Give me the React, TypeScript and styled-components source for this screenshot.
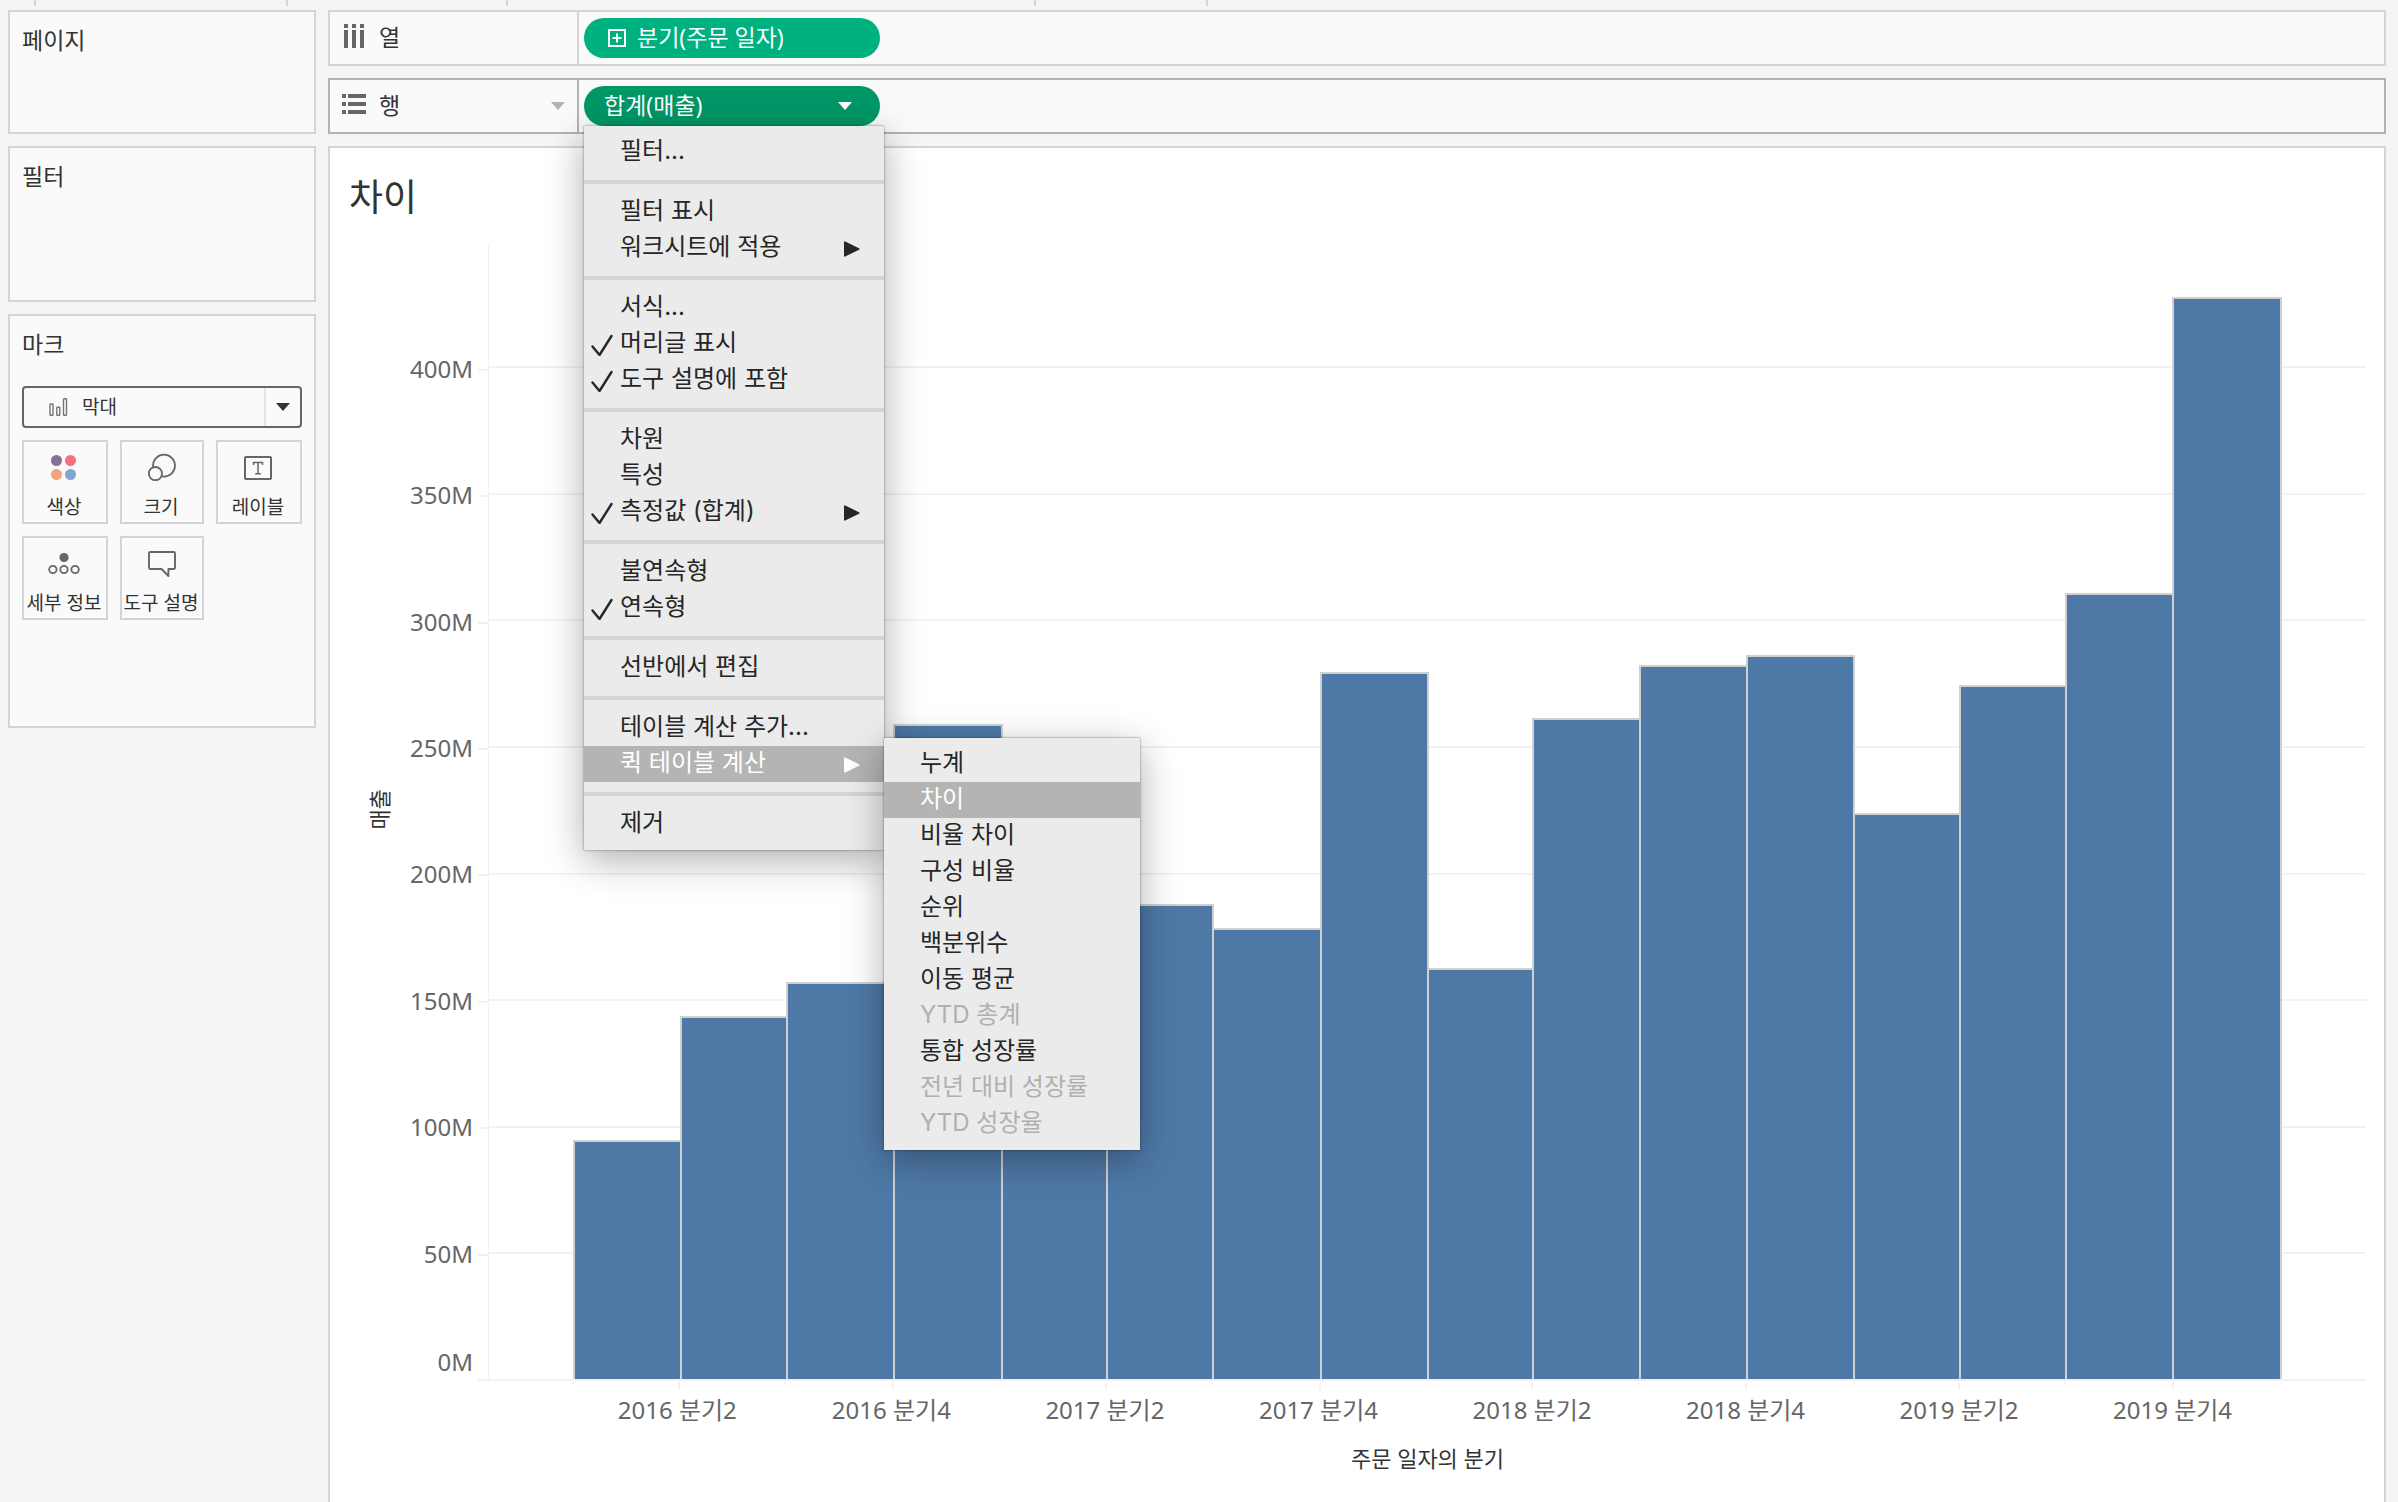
import React from 'react';
import styled, { createGlobalStyle, css } from 'styled-components';

const color = {
  page: '#f5f5f5',
  panel: '#fafafa',
  line: '#d4d4d4',
  lineActive: '#b3b3b3',
  text: '#333333',
  axis: '#666666',
  icon: '#666666',
  bar: '#4e79a7',
  pill: '#00b180',
  pillActive: '#009767',
  menu: '#ebebeb',
  menuText: '#262626',
  menuActive: '#b4b4b4',
  menuDisabled: '#b0b0b0',
  grid: '#f2f2f2',
};

const GlobalStyle = createGlobalStyle`
  *, *::before, *::after { box-sizing: border-box; }
  body {
    margin: 0;
    background: ${color.page};
    color: ${color.text};
    font-family: "Noto Sans", "Noto Sans CJK KR", sans-serif;
  }
  h1, h2, ul { margin: 0; padding: 0; }
  ul { list-style: none; }
  button, select { font-family: inherit; color: inherit; margin: 0; }
`;

/* ---------- Page frame ---------- */

const Page = styled.div`
  display: flex;
  flex-direction: column;
  height: 100vh;
  min-height: 900px;
  overflow: hidden;
`;

const ToolbarEdge = styled.div`
  display: flex;
  height: 10px;
  flex: none;
`;

const ToolbarGroup = styled.div<{ $width: number }>`
  width: ${(p) => p.$width}px;
  height: 6px;
  border-right: 2px solid ${color.line};
`;

const Workspace = styled.div`
  display: flex;
  flex: 1;
  min-height: 0;
  gap: 12px;
  padding: 0 12px 0 8px;
`;

const Sidebar = styled.aside`
  display: flex;
  flex-direction: column;
  gap: 12px;
  width: 308px;
  flex: none;
`;

const Main = styled.main`
  display: flex;
  flex-direction: column;
  flex: 1;
  min-width: 0;
  gap: 12px;
`;

/* ---------- Sidebar cards ---------- */

const Card = styled.section<{ $minHeight: number }>`
  min-height: ${(p) => p.$minHeight}px;
  padding: 13px 12px;
  background: ${color.panel};
  border: 2px solid ${color.line};
`;

const CardTitle = styled.h2`
  font-size: 23px;
  line-height: 30px;
  font-weight: 400;
`;

const MarkTypeField = styled.label`
  display: grid;
  grid-template-columns: 25px 20px 1fr 36px;
  align-items: center;
  height: 42px;
  margin-top: 27px;
  border: 2px solid ${color.icon};
  border-radius: 4px;
  background: ${color.panel};

  & > svg:first-child { grid-area: 1 / 2; }
`;

const MarkSelect = styled.select`
  grid-area: 1 / 1 / 2 / 5;
  width: 100%;
  height: 38px;
  padding: 0 0 0 58px;
  border: 0;
  background: transparent;
  appearance: none;
  font-size: 19px;
  line-height: 38px;
`;

const SelectArrow = styled.span`
  grid-area: 1 / 4;
  display: grid;
  place-items: center;
  height: 38px;
  border-left: 2px solid #e4e4e4;
  pointer-events: none;
`;

const MarkGrid = styled.div`
  display: grid;
  grid-template-columns: minmax(0, 86fr) minmax(0, 84fr) minmax(0, 86fr);
  gap: 12px;
  margin-top: 12px;
`;

const MarkButton = styled.button`
  display: flex;
  flex-direction: column;
  align-items: center;
  gap: 11px;
  height: 84px;
  padding: 10px 2px 0 0;
  border: 2px solid ${color.line};
  background: ${color.panel};
  font-size: 19px;
  line-height: 24px;
  white-space: nowrap;
`;

/* ---------- Shelves ---------- */

const ShelfBar = styled.section<{ $active?: boolean }>`
  display: flex;
  height: 56px;
  flex: none;
  background: ${color.panel};
  border: 2px solid ${(p) => (p.$active ? color.lineActive : color.line)};
`;

const ShelfHeader = styled.header<{ $active?: boolean }>`
  display: flex;
  align-items: center;
  gap: 13px;
  width: 249px;
  padding: 0 12px;
  border-right: 2px solid ${(p) => (p.$active ? color.lineActive : color.line)};
`;

const ShelfName = styled.h2`
  flex: 1;
  padding-bottom: 2px;
  font-size: 23px;
  line-height: 30px;
  font-weight: 400;
`;

const ShelfSlot = styled.div`
  display: flex;
  align-items: center;
  padding-left: 5px;
`;

const PillAnchor = styled.div`
  position: relative;
`;

const Pill = styled.button<{ $active?: boolean }>`
  display: flex;
  align-items: center;
  gap: 11px;
  width: 296px;
  height: 40px;
  padding: 0 28px 0 ${(p) => (p.$active ? 20 : 24)}px;
  border: 0;
  border-radius: 20px;
  background: ${(p) => (p.$active ? color.pillActive : color.pill)};
  color: #ffffff;
  font-size: 23px;
  line-height: 30px;
  text-align: left;
`;

const PillLabel = styled.span`
  flex: 1;
  padding-bottom: 2px;
`;

/* ---------- Menus ---------- */

const menuSurface = css`
  position: absolute;
  z-index: 2;
  padding: 8px 0;
  background: ${color.menu};
  box-shadow: 0 0 2px rgba(0, 0, 0, 0.5), 0 10px 36px rgba(0, 0, 0, 0.32);
`;

const Menu = styled.ul`
  ${menuSurface}
  top: 100%;
  left: 0;
  width: 300px;
  font-family: Inter, "Noto Sans CJK KR", sans-serif;
`;

const Submenu = styled.ul`
  ${menuSurface}
  top: -8px;
  left: 100%;
  width: 256px;
`;

const MenuRow = styled.li`
  position: relative;
`;

const MenuSeparator = styled.li`
  height: 4px;
  margin: 10px 0;
  background: ${color.line};
`;

const MenuButton = styled.button<{ $active?: boolean }>`
  display: grid;
  grid-template-columns: 22px 1fr 16px;
  column-gap: 7px;
  align-items: center;
  width: 100%;
  height: 36px;
  padding: 2px 24px 0 7px;
  border: 0;
  background: ${(p) => (p.$active ? color.menuActive : 'transparent')};
  color: ${(p) => (p.$active ? '#ffffff' : color.menuText)};
  font-size: 24px;
  line-height: 30px;
  text-align: left;
  white-space: nowrap;

  &:disabled { color: ${color.menuDisabled}; }
`;

const MenuLabel = styled.span`
  grid-column: 2;
  padding-bottom: 4px;
`;

/* ---------- Chart ---------- */

const View = styled.section`
  display: flex;
  flex-direction: column;
  flex: 1;
  min-height: 0;
  padding: 25px 18px 27px 19px;
  background: #ffffff;
  border: 2px solid ${color.line};
  border-bottom: 0;
`;

const ViewTitle = styled.h1`
  font-size: 37px;
  line-height: 48px;
  font-weight: 400;
`;

const ChartGrid = styled.div`
  display: grid;
  grid-template-columns: 34px 77px 15px 1fr;
  grid-template-rows: 1fr auto;
  flex: 1;
  min-height: 0;
  margin-top: 23px;
  padding-left: 13px;
`;

const ValueTitle = styled.div`
  place-self: center;
  margin-bottom: 6px;
  writing-mode: vertical-rl;
  text-orientation: sideways;
  transform: rotate(180deg);
  font-size: 22px;
  line-height: 34px;
`;

const ScaleColumn = styled.div`
  display: flex;
  flex-direction: column;
  padding-bottom: 2px;
`;

const ScaleStep = styled.div<{ $span: number }>`
  flex: ${(p) => p.$span} 0 0;
  min-height: 0;
  display: flex;
  flex-direction: column;
  align-items: flex-end;
`;

const ScaleLabel = styled.span`
  height: 34px;
  margin-top: -16px;
  color: ${color.axis};
  font-size: 24px;
  line-height: 34px;
`;

const ZeroLabel = styled(ScaleLabel)`
  margin-top: auto;
`;

const ScaleTick = styled.span`
  width: 10px;
  height: 2px;
  margin-top: 1px;
  background: ${color.grid};
`;

const ZeroTick = styled(ScaleTick)`
  margin: auto 0 -2px;
`;

const Plot = styled.div`
  display: grid;
  border-left: 1px solid ${color.grid};
  border-bottom: 2px solid ${color.grid};
`;

const GridLines = styled.div`
  grid-area: 1 / 1;
  display: flex;
  flex-direction: column;
`;

const GridStep = styled.div<{ $span: number; $line?: boolean }>`
  flex: ${(p) => p.$span} 0 0;
  min-height: 0;
  ${(p) => p.$line && `border-top: 2px solid ${color.grid};`}
`;

const Bars = styled.div`
  grid-area: 1 / 1;
  display: flex;
`;

const Span = styled.div<{ $days: number }>`
  flex: ${(p) => p.$days} 0 0;
  min-width: 0;
`;

const BarSlot = styled(Span)`
  display: flex;
  align-items: flex-end;
`;

const Bar = styled.div`
  flex: 1;
  margin: 0 -1px;
  background: ${color.bar};
  border: 2px solid #d0d0d0;
  border-bottom: 0;
`;

const TimeAxis = styled.div`
  grid-column: 4;
  display: flex;
  flex-direction: column;
  padding-left: 1px;
`;

const TickRow = styled.div`
  display: flex;
  height: 12px;
  padding-top: 1px;
`;

const Tick = styled(Span)<{ $major: boolean }>`
  height: ${(p) => (p.$major ? 8 : 2)}px;
  margin-left: -1px;
  margin-right: 1px;
  border-left: 2px solid ${color.grid};
`;

const TimeLabels = styled.div`
  display: flex;
  color: ${color.axis};
  font-size: 24px;
  line-height: 34px;
  text-align: center;
  white-space: nowrap;
`;

const TimeLabel = styled(Span)`
  padding-right: 4px;
`;

const TimeTitle = styled.div`
  margin-top: 14px;
  font-family: "Noto Sans", "Noto Sans CJK KR", sans-serif;
  font-size: 22px;
  line-height: 34px;
  text-align: center;
`;

/* ---------- Icons ---------- */

const ColumnsIcon = () => (
  <svg width="24" height="28" viewBox="0 0 24 28" fill={color.icon} aria-hidden="true">
    {[2, 10, 18].map((x) => (
      <g key={x}>
        <rect x={x} y="0" width="4" height="4" />
        <rect x={x} y="6" width="4" height="18" />
      </g>
    ))}
  </svg>
);

const RowsIcon = () => (
  <svg width="24" height="24" viewBox="0 0 24 24" fill={color.icon} aria-hidden="true">
    {[0, 8, 16].map((y) => (
      <g key={y}>
        <rect x="0" y={y} width="4" height="4" />
        <rect x="6" y={y} width="18" height="4" />
      </g>
    ))}
  </svg>
);

const Caret = ({ fill }: { fill: string }) => (
  <svg width="14" height="8" viewBox="0 0 14 8" fill={fill} aria-hidden="true">
    <path d="M0 0h14L7 8z" />
  </svg>
);

const ExpandIcon = () => (
  <svg width="18" height="18" viewBox="0 0 18 18" fill="none" stroke="#fff" strokeWidth="2" aria-hidden="true">
    <rect x="1" y="1" width="16" height="16" />
    <path d="M9 4.5v9M4.5 9h9" />
  </svg>
);

const CheckIcon = () => (
  <svg width="22" height="22" viewBox="0 0 22 22" fill="none" stroke="currentColor" strokeWidth="2.4" strokeLinecap="round" strokeLinejoin="round" aria-hidden="true">
    <path d="M1.5 12.5L8.5 21L20.5 2" />
  </svg>
);

const ArrowShape = styled.svg`
  grid-column: 3;
`;

const SubmenuArrow = () => (
  <ArrowShape width="16" height="18" viewBox="0 0 16 18" fill="currentColor" aria-hidden="true">
    <path d="M0 2.2Q0 1 1.2 1.5L15 8.2Q16.4 9 15 9.8L1.2 16.5Q0 17 0 15.8z" />
  </ArrowShape>
);

const BarTypeIcon = () => (
  <svg width="20" height="18" viewBox="0 0 20 18" fill="none" stroke="#757575" strokeWidth="1.4" aria-hidden="true">
    <rect x="1" y="6" width="3" height="11.3" rx="0.6" />
    <rect x="7.8" y="9.3" width="3" height="8" rx="0.6" />
    <rect x="14.5" y="0.7" width="3" height="16.6" rx="0.6" />
  </svg>
);

const ColorIcon = () => (
  <svg width="32" height="32" viewBox="0 0 32 32" aria-hidden="true">
    <circle cx="8.5" cy="8.5" r="5.5" fill="#857196" />
    <circle cx="22.5" cy="8.5" r="5.5" fill="#f9707f" />
    <circle cx="8.5" cy="22.5" r="5.5" fill="#f2a57c" />
    <circle cx="22.5" cy="22.5" r="5.5" fill="#82a5cd" />
  </svg>
);

const SizeIcon = () => (
  <svg width="32" height="32" viewBox="0 0 32 32" fill={color.panel} stroke={color.icon} strokeWidth="1.8" aria-hidden="true">
    <circle cx="19" cy="13.6" r="11" />
    <circle cx="10.4" cy="21.6" r="6.6" />
  </svg>
);

const LabelIcon = () => (
  <svg width="32" height="32" viewBox="0 0 32 32" fill="none" stroke={color.icon} strokeWidth="2" aria-hidden="true">
    <rect x="3" y="5" width="26" height="22" rx="0.8" />
    <path d="M11.5 13v-2.6h9V13M16 10.4v11.4M13.2 21.8h5.6" strokeWidth="1.5" />
  </svg>
);

const DetailIcon = () => (
  <svg width="32" height="32" viewBox="0 0 32 32" fill="none" stroke={color.icon} strokeWidth="1.8" aria-hidden="true">
    <circle cx="16" cy="9.5" r="4.6" fill={color.icon} stroke="none" />
    <circle cx="4.9" cy="21.5" r="3.7" />
    <circle cx="16" cy="21.5" r="3.7" />
    <circle cx="27.1" cy="21.5" r="3.7" />
  </svg>
);

const TooltipIcon = () => (
  <svg width="32" height="32" viewBox="0 0 32 32" fill="none" stroke={color.icon} strokeWidth="1.9" strokeLinejoin="round" aria-hidden="true">
    <path d="M5.2 4h23.6q1.2 0 1.2 1.2v14.6q0 1.2-1.2 1.2H23.4v7L16.6 21H5.2Q4 21 4 19.8V5.2Q4 4 5.2 4z" />
  </svg>
);

/* ---------- Data ---------- */

const marks = [
  { label: '색상', Icon: ColorIcon },
  { label: '크기', Icon: SizeIcon },
  { label: '레이블', Icon: LabelIcon },
  { label: '세부 정보', Icon: DetailIcon },
  { label: '도구 설명', Icon: TooltipIcon },
];

type Entry = {
  label: string;
  checked?: boolean;
  disabled?: boolean;
  active?: boolean;
  more?: boolean;
  children?: Entry[];
};

const quickCalculations: Entry[] = [
  { label: '누계' },
  { label: '차이', active: true },
  { label: '비율 차이' },
  { label: '구성 비율' },
  { label: '순위' },
  { label: '백분위수' },
  { label: '이동 평균' },
  { label: 'YTD 총계', disabled: true },
  { label: '통합 성장률' },
  { label: '전년 대비 성장률', disabled: true },
  { label: 'YTD 성장율', disabled: true },
];

const menuGroups: Entry[][] = [
  [{ label: '필터...' }],
  [{ label: '필터 표시' }, { label: '워크시트에 적용', more: true }],
  [
    { label: '서식...' },
    { label: '머리글 표시', checked: true },
    { label: '도구 설명에 포함', checked: true },
  ],
  [{ label: '차원' }, { label: '특성' }, { label: '측정값 (합계)', checked: true, more: true }],
  [{ label: '불연속형' }, { label: '연속형', checked: true }],
  [{ label: '선반에서 편집' }],
  [
    { label: '테이블 계산 추가...' },
    { label: '퀵 테이블 계산', active: true, more: true, children: quickCalculations },
  ],
  [{ label: '제거' }],
];

/* Sales per quarter in millions; a bar is as wide as its quarter has days. */
const quarters = [
  { days: 91, sales: 94.5 },
  { days: 91, sales: 143.5 },
  { days: 92, sales: 157 },
  { days: 92, sales: 259 },
  { days: 90, sales: 120 },
  { days: 91, sales: 187.8 },
  { days: 92, sales: 178.3 },
  { days: 92, sales: 279.5 },
  { days: 90, sales: 162.5 },
  { days: 91, sales: 261.3 },
  { days: 92, sales: 282.6 },
  { days: 92, sales: 286.5 },
  { days: 90, sales: 224.1 },
  { days: 91, sales: 274.7 },
  { days: 92, sales: 311.1 },
  { days: 92, sales: 428 },
];

const marginDays = 73;
const scaleHead = 49;
const scaleStep = 50;
const scaleMax = 400 + scaleHead;
const scaleValues = [400, 350, 300, 250, 200, 150, 100, 50];

const timeLabels = [2016, 2017, 2018, 2019].flatMap((year) => [`${year} 분기2`, `${year} 분기4`]);

/* ---------- Components ---------- */

const MenuEntry = ({ entry }: { entry: Entry }) => (
  <MenuRow role="none">
    <MenuButton
      type="button"
      role={entry.checked ? 'menuitemcheckbox' : 'menuitem'}
      aria-checked={entry.checked}
      aria-haspopup={entry.more ? 'menu' : undefined}
      disabled={entry.disabled}
      $active={entry.active}
    >
      {entry.checked && <CheckIcon />}
      <MenuLabel>{entry.label}</MenuLabel>
      {entry.more && <SubmenuArrow />}
    </MenuButton>
    {entry.children && (
      <Submenu role="menu" aria-label={entry.label}>
        {entry.children.map((child) => (
          <MenuEntry key={child.label} entry={child} />
        ))}
      </Submenu>
    )}
  </MenuRow>
);

const FieldMenu = () => (
  <Menu role="menu" aria-label="합계(매출)">
    {menuGroups.map((group, index) => (
      <React.Fragment key={group[0].label}>
        {index > 0 && <MenuSeparator role="separator" />}
        {group.map((entry) => (
          <MenuEntry key={entry.label} entry={entry} />
        ))}
      </React.Fragment>
    ))}
  </Menu>
);

const MarksCard = () => (
  <Card $minHeight={414}>
    <CardTitle>마크</CardTitle>
    <MarkTypeField>
      <BarTypeIcon />
      <MarkSelect aria-label="마크 유형" defaultValue="bar">
        <option value="bar">막대</option>
      </MarkSelect>
      <SelectArrow>
        <Caret fill={color.text} />
      </SelectArrow>
    </MarkTypeField>
    <MarkGrid>
      {marks.map(({ label, Icon }) => (
        <MarkButton key={label} type="button">
          <Icon />
          {label}
        </MarkButton>
      ))}
    </MarkGrid>
  </Card>
);

const Chart = () => (
  <ChartGrid>
    <ValueTitle>매출</ValueTitle>
    <ScaleColumn>
      <ScaleStep $span={scaleHead} />
      {scaleValues.map((value) => (
        <ScaleStep key={value} $span={scaleStep}>
          <ScaleLabel>{value}M</ScaleLabel>
          {value === 50 && <ZeroLabel>0M</ZeroLabel>}
        </ScaleStep>
      ))}
    </ScaleColumn>
    <ScaleColumn>
      <ScaleStep $span={scaleHead} />
      {scaleValues.map((value) => (
        <ScaleStep key={value} $span={scaleStep}>
          <ScaleTick />
          {value === 50 && <ZeroTick />}
        </ScaleStep>
      ))}
    </ScaleColumn>
    <Plot>
      <GridLines>
        <GridStep $span={scaleHead} />
        {scaleValues.map((value) => (
          <GridStep key={value} $span={scaleStep} $line />
        ))}
      </GridLines>
      <Bars>
        <Span $days={marginDays} />
        {quarters.map(({ days, sales }, index) => (
          <BarSlot key={index} $days={days}>
            <Bar style={{ height: `${(sales / scaleMax) * 100}%` }} />
          </BarSlot>
        ))}
        <Span $days={marginDays} />
      </Bars>
    </Plot>
    <TimeAxis>
      <TickRow>
        <Span $days={marginDays} />
        {quarters.map(({ days }, index) => (
          <Tick key={index} $days={days} $major={index % 2 === 1} />
        ))}
        <Tick $days={marginDays} $major={false} />
      </TickRow>
      <TimeLabels>
        <Span $days={marginDays} />
        {timeLabels.map((label, index) => (
          <TimeLabel key={label} $days={quarters[index * 2].days + quarters[index * 2 + 1].days}>
            {label}
          </TimeLabel>
        ))}
        <Span $days={marginDays} />
      </TimeLabels>
      <TimeTitle>주문 일자의 분기</TimeTitle>
    </TimeAxis>
  </ChartGrid>
);

export default function App() {
  return (
    <Page lang="ko">
      <GlobalStyle />
      <ToolbarEdge>
        {[36, 252, 220, 528, 172].map((width) => (
          <ToolbarGroup key={width} $width={width} />
        ))}
      </ToolbarEdge>
      <Workspace>
        <Sidebar>
          <Card $minHeight={124}>
            <CardTitle>페이지</CardTitle>
          </Card>
          <Card $minHeight={156}>
            <CardTitle>필터</CardTitle>
          </Card>
          <MarksCard />
        </Sidebar>
        <Main>
          <ShelfBar>
            <ShelfHeader>
              <ColumnsIcon />
              <ShelfName>열</ShelfName>
            </ShelfHeader>
            <ShelfSlot>
              <Pill type="button">
                <ExpandIcon />
                <PillLabel>분기(주문 일자)</PillLabel>
              </Pill>
            </ShelfSlot>
          </ShelfBar>
          <ShelfBar $active>
            <ShelfHeader $active>
              <RowsIcon />
              <ShelfName>행</ShelfName>
              <Caret fill={color.lineActive} />
            </ShelfHeader>
            <ShelfSlot>
              <PillAnchor>
                <Pill type="button" aria-haspopup="menu" aria-expanded="true" $active>
                  <PillLabel>합계(매출)</PillLabel>
                  <Caret fill="#ffffff" />
                </Pill>
                <FieldMenu />
              </PillAnchor>
            </ShelfSlot>
          </ShelfBar>
          <View>
            <ViewTitle>차이</ViewTitle>
            <Chart />
          </View>
        </Main>
      </Workspace>
    </Page>
  );
}
